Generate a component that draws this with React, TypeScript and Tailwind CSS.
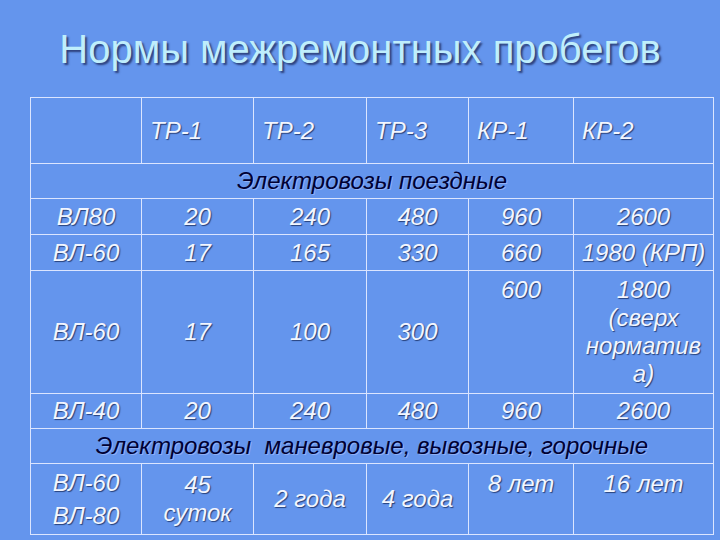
const light = "text-[#f2f6ff] [text-shadow:1px_1px_1px_#26407a]";
const dark = "text-[#000033] [text-shadow:1px_1px_0_#8fb0f5]";

function Cell({ children, className = "" }: { children?: React.ReactNode; className?: string }) {
  return <div className={`bg-[#6495ed] ${className}`}>{children}</div>;
}

const headers = ["ТР-1", "ТР-2", "ТР-3", "КР-1", "КР-2"];

export default function App() {
  return (
    <div
      className="w-[720px] h-[540px] overflow-hidden bg-[#6495ed]"
      style={{ fontFamily: '"Liberation Sans", Arial, sans-serif' }}
    >
      <div className="h-[97px] flex justify-center pt-[25px]">
        <h1 className="text-[40px] leading-[48px] text-[#bfeefc] [text-shadow:2px_2px_2px_#2c3f7a]">
          Нормы межремонтных пробегов
        </h1>
      </div>
      <div className="ml-[30px] w-[684px] grid grid-cols-[110px_111px_112px_101px_104px_139px] grid-rows-[65px_34px_35px_35px_122px_34px_34px_70px] gap-px p-px bg-[#dbe5ff] italic text-[24px] leading-[28px]">
        <Cell />
        {headers.map((h) => (
          <Cell key={h} className={`flex items-center pl-2 ${light}`}>
            {h}
          </Cell>
        ))}

        <Cell className={`col-span-6 flex items-center justify-center ${dark}`}>Электровозы поездные</Cell>

        {["ВЛ80", "20", "240", "480", "960", "2600"].map((t, i) => (
          <Cell key={"a" + i} className={`flex items-center justify-center ${light}`}>
            {t}
          </Cell>
        ))}
        {["ВЛ-60", "17", "165", "330", "660", "1980 (КРП)"].map((t, i) => (
          <Cell key={"b" + i} className={`flex items-center justify-center whitespace-nowrap ${light}`}>
            {t}
          </Cell>
        ))}

        {["ВЛ-60", "17", "100", "300"].map((t, i) => (
          <Cell key={"c" + i} className={`flex items-center justify-center ${light}`}>
            {t}
          </Cell>
        ))}
        <Cell className={`text-center pt-[5px] ${light}`}>600</Cell>
        <Cell className={`text-center pt-[5px] ${light}`}>
          1800
          <br />
          (сверх
          <br />
          норматив
          <br />
          а)
        </Cell>

        {["ВЛ-40", "20", "240", "480", "960", "2600"].map((t, i) => (
          <Cell key={"d" + i} className={`flex items-center justify-center ${light}`}>
            {t}
          </Cell>
        ))}

        <Cell className={`col-span-6 flex items-center justify-center whitespace-pre ${dark}`}>
          {"Электровозы  маневровые, вывозные, горочные"}
        </Cell>

        <Cell className={`flex flex-col items-center justify-center leading-[33px] ${light}`}>
          <span>ВЛ-60</span>
          <span>ВЛ-80</span>
        </Cell>
        <Cell className={`flex flex-col items-center justify-center ${light}`}>
          <span>45</span>
          <span>суток</span>
        </Cell>
        <Cell className={`flex items-center justify-center ${light}`}>2 года</Cell>
        <Cell className={`flex items-center justify-center ${light}`}>4 года</Cell>
        <Cell className={`text-center pt-[6px] ${light}`}>8 лет</Cell>
        <Cell className={`text-center pt-[6px] ${light}`}>16 лет</Cell>
      </div>
    </div>
  );
}
